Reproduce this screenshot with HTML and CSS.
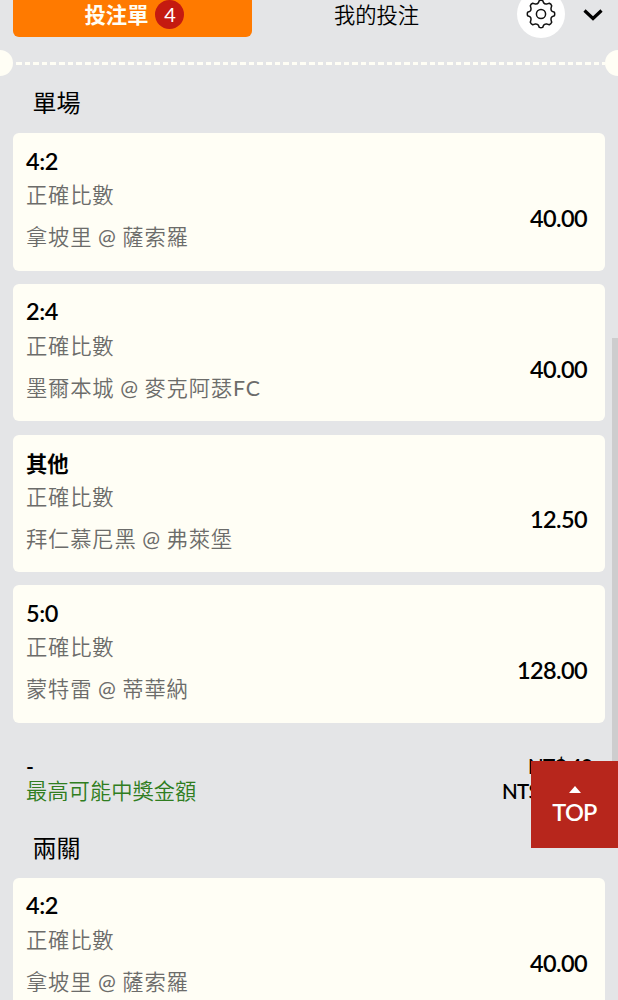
FILE: index.html
```html
<!DOCTYPE html>
<html lang="zh-Hant">
<head>
    <meta charset="UTF-8">
    <meta name="viewport" content="width=device-width, initial-scale=1.0">
    <title>投注單</title>
    <link rel="stylesheet" href="styles.css">
</head>
<body>
    <div class="betslip">
        <div class="header">
            <div class="tab active">投注單<span class="count">4</span></div>
            <div class="tab">我的投注</div>
            <button class="settings" aria-label="設定">
                <svg width="32" height="32" viewBox="-16 -16 32 32" fill="none" stroke="#111" stroke-width="1.5" stroke-linejoin="round">
                    <path d="M-1.7-13.4Q0-14 1.7-13.4L2.6-11.2Q3.75-9.6 6.1-10.1L8.3-10.7Q10-10 10.7-8.3L10.1-6.1Q9.6-3.75 11.2-2.6L13.4-1.7Q14 0 13.4 1.7L11.2 2.6Q9.6 3.75 10.1 6.1L10.7 8.3Q10 10 8.3 10.7L6.1 10.1Q3.75 9.6 2.6 11.2L1.7 13.4Q0 14-1.7 13.4L-2.6 11.2Q-3.75 9.6-6.1 10.1L-8.3 10.7Q-10 10-10.7 8.3L-10.1 6.1Q-9.6 3.75-11.2 2.6L-13.4 1.7Q-14 0-13.4-1.7L-11.2-2.6Q-9.6-3.75-10.1-6.1L-10.7-8.3Q-10-10-8.3-10.7L-6.1-10.1Q-3.75-9.6-2.6-11.2Z"/>
                    <circle r="4.6"/>
                </svg>
            </button>
            <button class="collapse" aria-label="收合">
                <svg width="20" height="14" viewBox="0 0 20 14" fill="none" stroke="#000" stroke-width="3.2">
                    <path d="M1.5 2.5L10 10.5L18.5 2.5"/>
                </svg>
            </button>
        </div>

        <div class="tear-line">
            <span class="notch"></span>
            <span class="dashes"></span>
            <span class="notch"></span>
        </div>

        <h2 class="section-title">單場</h2>
        <div class="bet-list">
            <div class="bet">
                <div class="bet-info">
                    <div class="pick">4:2</div>
                    <div class="market">正確比數</div>
                    <div class="match">拿坡里 @ 薩索羅</div>
                </div>
                <div class="odds">40.00</div>
            </div>
            <div class="bet">
                <div class="bet-info">
                    <div class="pick">2:4</div>
                    <div class="market">正確比數</div>
                    <div class="match">墨爾本城 @ 麥克阿瑟FC</div>
                </div>
                <div class="odds">40.00</div>
            </div>
            <div class="bet">
                <div class="bet-info">
                    <div class="pick other">其他</div>
                    <div class="market">正確比數</div>
                    <div class="match">拜仁慕尼黑 @ 弗萊堡</div>
                </div>
                <div class="odds">12.50</div>
            </div>
            <div class="bet">
                <div class="bet-info">
                    <div class="pick">5:0</div>
                    <div class="market">正確比數</div>
                    <div class="match">蒙特雷 @ 蒂華納</div>
                </div>
                <div class="odds">128.00</div>
            </div>
        </div>

        <div class="summary">
            <div class="summary-row">
                <span>-</span>
                <span class="amount">NT$ 40</span>
            </div>
            <div class="summary-row">
                <span class="payout-label">最高可能中獎金額</span>
                <span class="amount">NT$ 2,205</span>
            </div>
        </div>

        <h2 class="section-title">兩關</h2>
        <div class="bet-list">
            <div class="bet">
                <div class="bet-info">
                    <div class="pick">4:2</div>
                    <div class="market">正確比數</div>
                    <div class="match">拿坡里 @ 薩索羅</div>
                </div>
                <div class="odds">40.00</div>
            </div>
        </div>

        <div class="scrollbar"></div>
        <a class="back-to-top" href="#">
            <span class="arrow-up"></span>
            TOP
        </a>
    </div>
</body>
</html>
```

FILE: styles.css
```css
* {
    margin: 0;
    padding: 0;
    box-sizing: border-box;
}

body {
    font-family: Lato, 'Noto Sans CJK TC', sans-serif;
    background: #e4e5e7;
    color: #000;
}

button {
    border: none;
    background: none;
}

svg {
    display: block;
}

.betslip {
    position: relative;
    height: 1000px;
    overflow: hidden;
}

.header {
    display: flex;
    align-items: flex-start;
    height: 50px;
    padding-left: 13px;
}

.tab {
    display: flex;
    justify-content: center;
    align-items: center;
    width: 239px;
    height: 37px;
    padding-bottom: 7px;
    font-size: 21.3px;
    line-height: 30px;
}

.tab:not(.active) {
    width: 249px;
    font-family: Lato, 'Noto Sans CJK TC DemiLight', 'Noto Sans CJK TC', sans-serif;
}

.tab.active {
    padding-left: 4px;
    background: #ff7a00;
    color: #fffef5;
    font-weight: bold;
    border-radius: 0 0 6px 6px;
}

.count {
    width: 29px;
    height: 29px;
    margin: -2px 0 0 7px;
    border-radius: 50%;
    background: #c41a10;
    color: #fff;
    font-size: 20px;
    font-weight: normal;
    line-height: 29px;
    text-align: center;
}

.settings {
    display: flex;
    justify-content: center;
    align-items: center;
    width: 48px;
    height: 48px;
    margin: -10px 0 0 16px;
    border-radius: 50%;
    background: #fff;
}

.collapse {
    margin: 8px 0 0 18px;
}

.tear-line {
    display: flex;
    align-items: center;
    height: 26px;
    margin: 0 -13px;
}

.notch {
    width: 26px;
    height: 26px;
    border-radius: 50%;
    background: #fffef5;
}

.dashes {
    flex: 1;
    height: 3px;
    background: repeating-linear-gradient(90deg, transparent 0 3px, #fffef5 3px 8.62px);
}

.section-title {
    height: 57px;
    padding: 12px 32.5px 0;
    font-size: 24px;
    font-weight: normal;
    line-height: 30px;
}

.bet-list {
    display: flex;
    flex-direction: column;
    gap: 13.2px;
    padding: 0 13px;
}

.bet {
    display: flex;
    justify-content: space-between;
    align-items: center;
    height: 137.6px;
    padding: 10px 18px 16px 13px;
    border-radius: 6px;
    background: #fffef5;
}

.pick {
    height: 34.5px;
    font-size: 23.5px;
    font-weight: 600;
    line-height: 31px;
    letter-spacing: -0.4px;
}

.pick.other {
    font-size: 21.3px;
    letter-spacing: 0;
    line-height: 35px;
}

.market,
.match {
    color: #6c6c6a;
    font-family: Lato, 'Noto Sans CJK TC DemiLight', 'Noto Sans CJK TC', sans-serif;
    font-size: 21.3px;
    letter-spacing: 0.82px;
    line-height: 30px;
}

.match {
    margin-top: 12px;
    word-spacing: -0.6px;
}

.odds {
    padding-top: 38px;
    font-size: 23.5px;
    font-weight: 600;
    letter-spacing: -0.6px;
    line-height: 30px;
}

.summary {
    padding: 30px 26px 0;
    height: 98px;
}

.summary-row {
    display: flex;
    justify-content: space-between;
    height: 25px;
    font-size: 21.3px;
    font-weight: 600;
    line-height: 26px;
}

.amount {
    font-size: 20.5px;
    letter-spacing: -0.8px;
}

.payout-label {
    color: #2f7d20;
    font-family: Lato, 'Noto Sans CJK TC DemiLight', 'Noto Sans CJK TC', sans-serif;
    font-weight: normal;
}

.scrollbar {
    position: absolute;
    top: 338px;
    right: 0;
    width: 6px;
    height: 480px;
    background: #cdcdce;
}

.back-to-top {
    position: absolute;
    top: 761px;
    right: 0;
    display: flex;
    flex-direction: column;
    align-items: center;
    width: 87px;
    height: 87px;
    padding-top: 25px;
    background: #b7261c;
    color: #fff;
    font-size: 23.5px;
    font-weight: 600;
    letter-spacing: -0.7px;
    line-height: 30px;
    text-decoration: none;
}

.arrow-up {
    margin-bottom: 4px;
    border: 6.5px solid transparent;
    border-top: none;
    border-bottom: 7px solid #fff;
}
```
